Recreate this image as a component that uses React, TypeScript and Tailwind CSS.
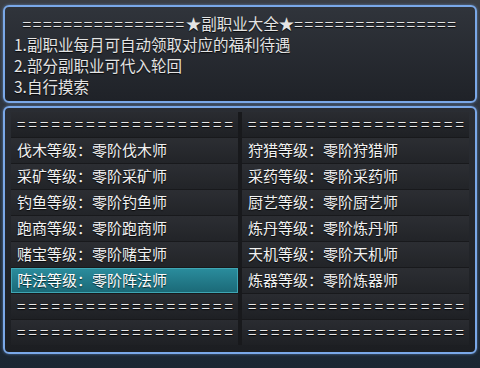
import React from "react";

const rows: [string, string][] = [
  ["伐木等级：零阶伐木师", "狩猎等级：零阶狩猎师"],
  ["采矿等级：零阶采矿师", "采药等级：零阶采药师"],
  ["钓鱼等级：零阶钓鱼师", "厨艺等级：零阶厨艺师"],
  ["跑商等级：零阶跑商师", "炼丹等级：零阶炼丹师"],
  ["赌宝等级：零阶赌宝师", "天机等级：零阶天机师"],
  ["阵法等级：零阶阵法师", "炼器等级：零阶炼器师"],
];

const EQ = "=".repeat(19);

const Cell = ({
  children,
  active = false,
}: {
  children: React.ReactNode;
  active?: boolean;
}) => (
  <div
    className={
      active
        ? "flex h-[25px] items-center overflow-hidden whitespace-nowrap border border-[#3fa6b4] bg-gradient-to-b from-[#2a8c9c] to-[#1b6a78] pl-[5px] text-[15px] text-white [text-shadow:0_1px_1px_rgba(0,0,0,0.7)]"
        : "flex h-[25px] items-center overflow-hidden whitespace-nowrap bg-gradient-to-b from-[#2c2e33] to-[#222428] pl-[6px] text-[15px] text-[#f2f2f2] [text-shadow:0_1px_1px_rgba(0,0,0,0.8)]"
    }
  >
    {children}
  </div>
);

const EqCell = () => (
  <div className="flex h-[25px] items-center overflow-hidden whitespace-nowrap bg-gradient-to-b from-[#2a2c31] to-[#1e2024] pl-[6px] text-[15px] tracking-[3.2px] text-[#e8e8e8] [text-shadow:0_1px_1px_rgba(0,0,0,0.9)]">
    {EQ}
  </div>
);

export default function App() {
  return (
    <div
      className="flex h-[368px] w-[480px] flex-col overflow-hidden bg-gradient-to-b from-[#3b3e44] via-[#26303c] to-[#1b2632] pt-[5px]"
      style={{ fontFamily: '"Noto Sans CJK SC", "Noto Sans", sans-serif' }}
    >
      <div className="mx-[3px] h-[98px] rounded-[6px] border-2 border-[#7aa8e8] bg-gradient-to-b from-[#30343b] to-[#1f2228] px-[9px] pt-[6px] text-[15.5px] leading-[21px] text-[#e4e4e4] shadow-[0_0_3px_rgba(122,168,232,0.6)] [text-shadow:0_1px_1px_rgba(0,0,0,0.8)]">
        <div className="flex justify-center whitespace-nowrap">
          <span className="tracking-[1.6px]">{"=".repeat(16)}</span>
          <span>★副职业大全★</span>
          <span className="tracking-[1.6px]">{"=".repeat(16)}</span>
        </div>
        <div>1.副职业每月可自动领取对应的福利待遇</div>
        <div>2.部分副职业可代入轮回</div>
        <div>3.自行摸索</div>
      </div>
      <div className="mx-[3px] mt-[3px] h-[248px] rounded-[6px] border-2 border-[#7aa8e8] bg-gradient-to-b from-[#2a2d33] to-[#1c1e22] px-[6px] pt-[4px] shadow-[0_0_3px_rgba(122,168,232,0.6)]">
        <div className="grid grid-cols-2 gap-x-[4px] gap-y-[1px] bg-[#18191c]">
          <EqCell />
          <EqCell />
          {rows.map(([a, b], i) => (
            <React.Fragment key={i}>
              <Cell active={i === rows.length - 1}>{a}</Cell>
              <Cell>{b}</Cell>
            </React.Fragment>
          ))}
          <EqCell />
          <EqCell />
          <EqCell />
          <EqCell />
        </div>
      </div>
    </div>
  );
}
